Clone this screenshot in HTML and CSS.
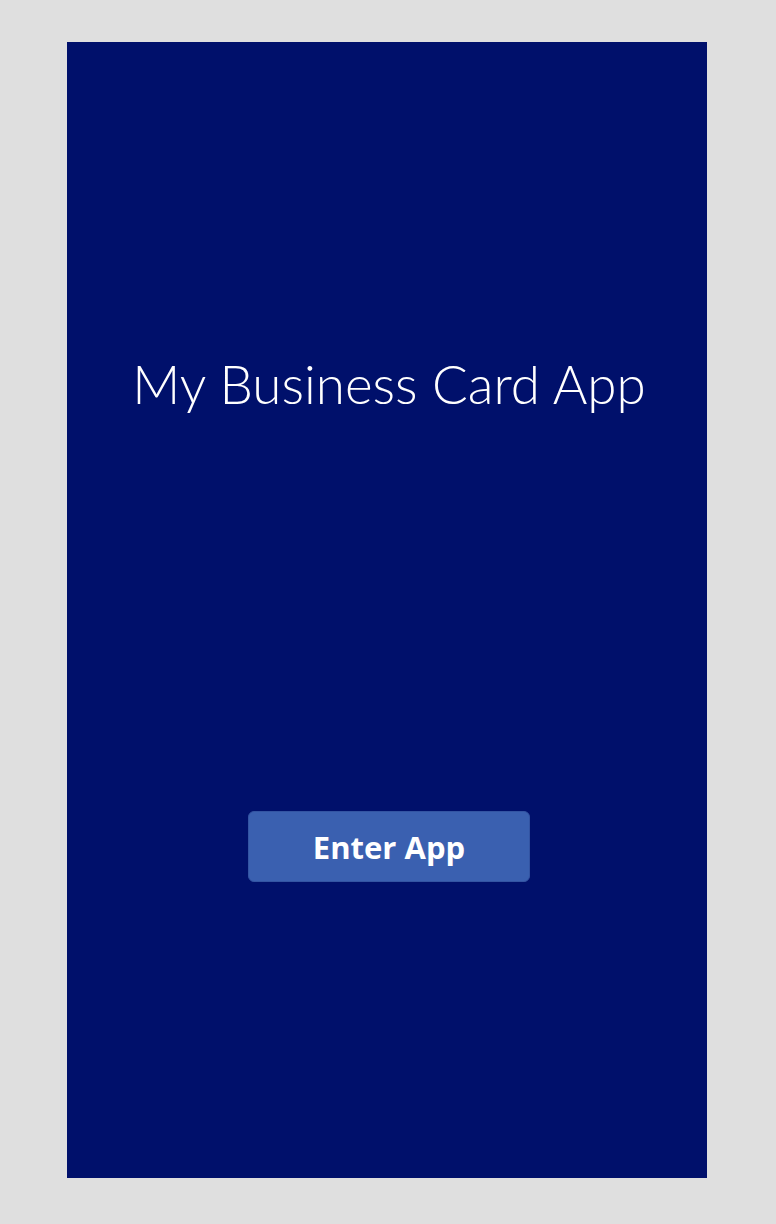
FILE: index.html
```html
<!DOCTYPE html>
<html lang="en">
<head>
<meta charset="utf-8">
<title>My Business Card App</title>
<link rel="stylesheet" href="styles.css">
</head>
<body>
<main class="screen">
  <h1 class="title">My Business Card App</h1>
  <button class="enter-btn" type="button">Enter App</button>
</main>
</body>
</html>
```
FILE: styles.css
```css
html, body {
  margin: 0;
  padding: 0;
}
body {
  background: #dfdfdf;
  padding: 42px 69px 46px 67px;
}
.screen {
  width: 640px;
  height: 1136px;
  background: #00106b;
  display: flex;
  flex-direction: column;
  align-items: center;
  box-sizing: border-box;
  padding-top: 310px;
  padding-left: 4px;
}
.title {
  margin: 0;
  font-family: Lato, "Noto Sans", sans-serif;
  font-weight: 300;
  font-size: 53px;
  line-height: 64px;
  color: #ffffff;
  text-align: center;
}
.enter-btn {
  margin-top: 395px;
  width: 282px;
  height: 71px;
  background: #3a60b0;
  border: 1px solid #3354a2;
  border-radius: 6px;
  color: #ffffff;
  font-family: "Open Sans", "Noto Sans", sans-serif;
  font-weight: 700;
  font-size: 31px;
  padding: 0;
}
```
